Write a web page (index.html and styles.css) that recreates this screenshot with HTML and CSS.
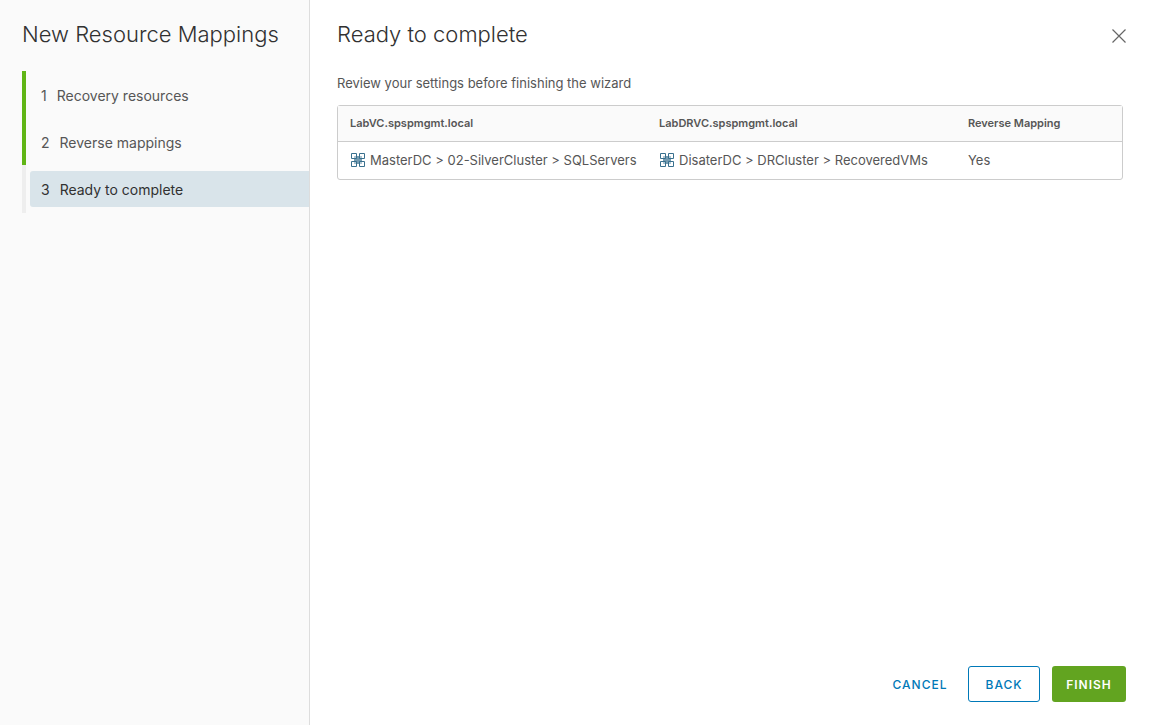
FILE: index.html
```
<!DOCTYPE html>
<html lang="en">
<head>
<meta charset="utf-8">
<title>New Resource Mappings</title>
<link rel="stylesheet" href="styles.css">
</head>
<body>
<div class="wizard">
  <aside class="sidebar">
    <h1 class="title">New Resource Mappings</h1>
    <ol class="steps">
      <li class="step done"><button type="button" class="step-link"><span>1</span><span>Recovery resources</span></button></li>
      <li class="step done"><button type="button" class="step-link"><span>2</span><span>Reverse mappings</span></button></li>
      <li class="step"><button type="button" class="step-link active" aria-current="step"><span>3</span><span>Ready to complete</span></button></li>
    </ol>
  </aside>
  <main class="page">
    <header class="page-head">
      <h2 class="title">Ready to complete</h2>
      <button type="button" class="close" aria-label="Close">
        <svg width="14" height="14" viewBox="0 0 14 14"><path d="M.5.5l13 13M13.5.5l-13 13" fill="none" stroke="#666" stroke-width="1.2"/></svg>
      </button>
    </header>
    <section class="content">
      <p class="intro">Review your settings before finishing the wizard</p>
      <table class="grid">
        <thead>
          <tr><th>LabVC.spspmgmt.local</th><th>LabDRVC.spspmgmt.local</th><th class="narrow">Reverse Mapping</th></tr>
        </thead>
        <tbody>
          <tr>
            <td>
              <div class="cell">
                <svg class="pool" viewBox="0 0 14 14"><path class="glow" d="M3 3h8v8H3z"/><path class="core" d="M5 3h4v2h2v4H9v2H5V9H3V5h2z"/><path class="box" d="M.5.5h5v5h-5zM8.5.5h5v5h-5zM.5 8.5h5v5h-5zM8.5 8.5h5v5h-5z"/></svg>
                <span>MasterDC &gt; 02-SilverCluster &gt; SQLServers</span>
              </div>
            </td>
            <td>
              <div class="cell">
                <svg class="pool" viewBox="0 0 14 14"><path class="glow" d="M3 3h8v8H3z"/><path class="core" d="M5 3h4v2h2v4H9v2H5V9H3V5h2z"/><path class="box" d="M.5.5h5v5h-5zM8.5.5h5v5h-5zM.5 8.5h5v5h-5zM8.5 8.5h5v5h-5z"/></svg>
                <span>DisaterDC &gt; DRCluster &gt; RecoveredVMs</span>
              </div>
            </td>
            <td>Yes</td>
          </tr>
        </tbody>
      </table>
    </section>
    <footer class="actions">
      <button type="button" class="btn link">CANCEL</button>
      <button type="button" class="btn outline">BACK</button>
      <button type="button" class="btn primary">FINISH</button>
    </footer>
  </main>
</div>
</body>
</html>
```
FILE: styles.css
```
* {
	box-sizing: border-box;
}
body {
	margin: 0;
	font-family: Inter, "Open Sans", sans-serif;
	font-size: 13px;
	line-height: 24px;
	color: #565656;
	background: #fff;
}
button {
	font: inherit;
	color: inherit;
	background: none;
	border: 0;
	padding: 0;
	cursor: pointer;
}
.wizard {
	display: flex;
	min-height: 100vh;
}
.sidebar {
	flex: 0 0 310px;
	padding: 22px 0 0 22px;
	background: #fafafa;
	border-right: 1px solid #ddd;
}
.title {
	margin: 0;
	font-size: 22px;
	line-height: 24px;
	font-weight: 300;
	color: #313131;
	white-space: nowrap;
}
.steps {
	margin: 25px 0 0;
	padding: 0;
	list-style: none;
}
.step {
	padding: 6px 0 6px 4px;
	border-left: 4px solid #eee;
}
.step.done {
	padding-bottom: 5px;
	border-color: #60b515;
}
.step-link {
	display: flex;
	align-items: center;
	gap: 10px;
	width: 100%;
	height: 36px;
	padding: 2px 0 0 11px;
	border-radius: 3px 0 0 3px;
	font-size: 14px;
	text-align: left;
}
.step-link.active {
	background: #d9e4ea;
	color: #313131;
}
.page {
	flex: 1;
	display: flex;
	flex-direction: column;
	padding: 22px 23px 23px 27px;
}
.page-head {
	display: flex;
	justify-content: space-between;
}
.close {
	display: flex;
	align-items: center;
	height: 28px;
}
.content {
	padding-right: 3px;
}
.intro {
	margin: 21px 0 10px;
}
.grid {
	width: 100%;
	border: 1px solid #ccc;
	border-radius: 3px;
	border-spacing: 0;
	table-layout: fixed;
}
.grid th,
.grid td {
	padding: 0 12px 2px;
	text-align: left;
}
.grid th {
	height: 36px;
	font-size: 11px;
	font-weight: 600;
	background: #fafafa;
	border-bottom: 1px solid #ccc;
}
.grid td {
	height: 37px;
}
.grid .narrow {
	width: 166px;
}
.cell {
	display: flex;
	align-items: center;
	gap: 5px;
	white-space: nowrap;
}
.pool {
	flex: none;
	width: 14px;
	height: 14px;
	margin-left: 1px;
}
.pool .box {
	fill: none;
	stroke: #39708e;
}
.pool .core {
	fill: #39708e;
	fill-opacity: .5;
}
.pool .glow {
	fill: #39708e;
	fill-opacity: .4;
}
.actions {
	display: flex;
	justify-content: flex-end;
	gap: 12px;
	margin-top: auto;
}
.btn {
	height: 36px;
	min-width: 72px;
	padding: 2px 12px 0;
	border: 1px solid transparent;
	border-radius: 3px;
	font-size: 12px;
	font-weight: 500;
	letter-spacing: 1px;
}
.btn.link {
	padding: 2px 6px 0;
	color: #0079b8;
}
.btn.outline {
	color: #0079b8;
	border-color: #0079b8;
}
.btn.primary {
	min-width: 74px;
	color: #fff;
	background: #62a420;
	font-weight: 600;
}
```
